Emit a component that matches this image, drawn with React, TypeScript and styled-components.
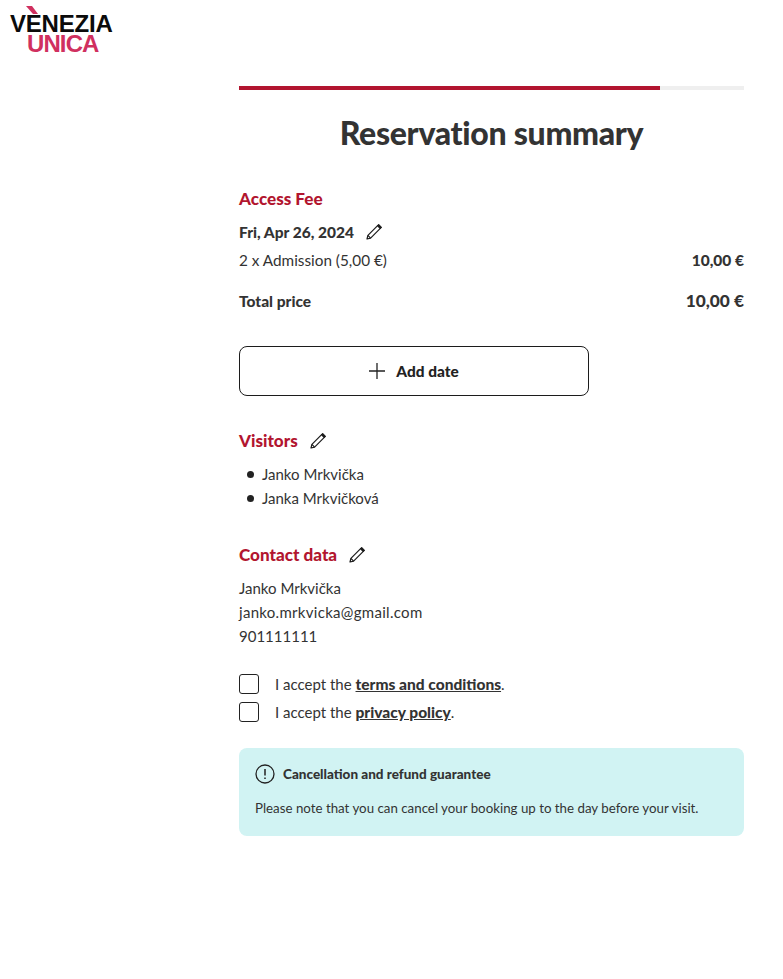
import styled, { createGlobalStyle } from 'styled-components'

const Global = createGlobalStyle`
  html, body { margin: 0; padding: 0; background: #fff; }
  body {
    font-family: "Lato", "Noto Sans", sans-serif;
    color: #333;
  }
`

const Page = styled.div`
  width: 783px;
  height: 979px;
  overflow: hidden;
`

const Logo = styled.div`
  position: relative;
  width: 110px;
  height: 54px;
  margin-left: 10px;
  padding-top: 14px;
  box-sizing: border-box;
  font-family: "Liberation Sans", sans-serif;
  font-weight: 700;
  font-size: 24px;
  line-height: 20px;
  letter-spacing: -0.2px;
  color: #0b0b0b;
  svg {
    position: absolute;
    left: 16px;
    top: 6px;
  }
`

const LogoLower = styled.div`
  color: #d0305f;
  margin-left: 17px;
  letter-spacing: -0.9px;
`

const Main = styled.main`
  width: 505px;
  margin: 32px 0 0 239px;
`

const Progress = styled.div`
  height: 4px;
  background: #efefef;
`

const ProgressFill = styled.div`
  height: 100%;
  background: #b2152f;
`

const Title = styled.h1`
  margin: 22px 0 0;
  font-size: 32px;
  line-height: 42px;
  font-weight: 900;
  text-align: center;
  letter-spacing: -0.3px;
`

const SectionTitle = styled.h2<{ $top: number }>`
  display: flex;
  align-items: center;
  gap: 12px;
  margin: ${p => p.$top}px 0 0;
  font-size: 17.1px;
  line-height: 24px;
  font-weight: 900;
  color: #b2152f;
`

const DateRow = styled.div`
  display: flex;
  align-items: center;
  gap: 12px;
  margin-top: 9px;
  font-size: 15.5px;
  line-height: 24px;
  font-weight: 900;
`

const PriceRow = styled.div<{ $top: number }>`
  display: flex;
  justify-content: space-between;
  margin-top: ${p => p.$top}px;
  font-size: 15.3px;
  line-height: 24px;
`

const Strong = styled.span<{ $size?: number }>`
  font-weight: 900;
  font-size: ${p => p.$size ?? 15.5}px;
`

const AddButton = styled.button`
  display: flex;
  align-items: center;
  justify-content: center;
  gap: 11px;
  box-sizing: border-box;
  width: 350px;
  height: 50px;
  margin-top: 33px;
  background: #fff;
  border: 1px solid #1c1c1c;
  border-radius: 8px;
  color: #222;
  font-family: inherit;
  font-size: 15.4px;
  font-weight: 900;
`

const VisitorList = styled.ul`
  list-style: none;
  margin: 9px 0 0;
  padding: 0;
`

const Visitor = styled.li`
  display: flex;
  align-items: center;
  gap: 8px;
  padding-left: 8px;
  font-size: 15px;
  line-height: 24px;
  &::before {
    content: '';
    width: 7px;
    height: 7px;
    border-radius: 50%;
    background: #222;
  }
`

const ContactBlock = styled.div`
  margin-top: 9px;
  font-size: 15px;
  line-height: 24px;
`

const ContactLine = styled.div<{ $spacing?: number }>`
  letter-spacing: ${p => p.$spacing ?? 0}px;
`

const Checks = styled.div`
  display: flex;
  flex-direction: column;
  gap: 8px;
  margin-top: 26px;
`

const CheckRow = styled.label`
  display: flex;
  align-items: center;
  gap: 16px;
  height: 20px;
  font-size: 15px;
`

const CheckBox = styled.span`
  box-sizing: border-box;
  width: 20px;
  height: 20px;
  border: 1px solid #222;
  border-radius: 3px;
`

const TermsLink = styled.a`
  font-size: 15.5px;
  font-weight: 900;
  color: #333;
  text-decoration: underline;
`

const Notice = styled.div`
  box-sizing: border-box;
  height: 88px;
  margin-top: 26px;
  padding: 16px;
  background: #d1f3f3;
  border-radius: 8px;
`

const NoticeHead = styled.div`
  display: flex;
  align-items: center;
  gap: 8px;
  font-size: 13.5px;
  line-height: 20px;
  font-weight: 900;
`

const NoticeText = styled.p`
  margin: 14px 0 0;
  font-size: 13.3px;
  line-height: 20px;
`

const Pencil = () => (
  <svg width="16" height="16" viewBox="0 0 16 16" fill="none" stroke="#1c1c1c" strokeWidth="1.2" strokeLinejoin="round">
    <path d="M1 15l.9-3.6L11.6 1.7l2.7 2.7L4.6 14.1 1 15z" />
    <path d="M1.9 11.4l2.7 2.7" />
    <path d="M11.6 1.7l1.1-1.1 2.7 2.7-1.1 1.1z" fill="#1c1c1c" />
  </svg>
)

const App = () => {
  return (
    <Page>
      <Global />
      <Logo>
        <svg width="14" height="8" viewBox="0 0 14 8">
          <path d="M0 0h6l6 8H7z" fill="#d0305f" />
        </svg>
        <div>VENEZIA</div>
        <LogoLower>UNICA</LogoLower>
      </Logo>
      <Main>
        <Progress>
          <ProgressFill style={{ width: `${(421 / 505) * 100}%` }} />
        </Progress>
        <Title>Reservation summary</Title>

        <SectionTitle $top={33}>Access Fee</SectionTitle>
        <DateRow>
          Fri, Apr 26, 2024
          <Pencil />
        </DateRow>
        <PriceRow $top={4}>
          <span>2 x Admission (5,00 €)</span>
          <Strong>10,00 €</Strong>
        </PriceRow>
        <PriceRow $top={17}>
          <Strong>Total price</Strong>
          <Strong $size={17.3}>10,00 €</Strong>
        </PriceRow>

        <AddButton type="button">
          <svg width="16" height="16" viewBox="0 0 16 16" stroke="#222" strokeWidth="1.3">
            <path d="M8 0v16M0 8h16" />
          </svg>
          Add date
        </AddButton>

        <SectionTitle $top={33}>
          Visitors
          <Pencil />
        </SectionTitle>
        <VisitorList>
          <Visitor>Janko Mrkvička</Visitor>
          <Visitor>Janka Mrkvičková</Visitor>
        </VisitorList>

        <SectionTitle $top={33}>
          Contact data
          <Pencil />
        </SectionTitle>
        <ContactBlock>
          <ContactLine>Janko Mrkvička</ContactLine>
          <ContactLine $spacing={0.3}>janko.mrkvicka@gmail.com</ContactLine>
          <ContactLine>901111111</ContactLine>
        </ContactBlock>

        <Checks>
          <CheckRow>
            <CheckBox />
            <span>
              I accept the <TermsLink>terms and conditions</TermsLink>.
            </span>
          </CheckRow>
          <CheckRow>
            <CheckBox />
            <span>
              I accept the <TermsLink>privacy policy</TermsLink>.
            </span>
          </CheckRow>
        </Checks>

        <Notice>
          <NoticeHead>
            <svg width="20" height="20" viewBox="0 0 20 20" fill="none" stroke="#222" strokeWidth="1.3">
              <circle cx="10" cy="10" r="9" />
              <path d="M10 5v6.5M10 13.5v1.5" strokeWidth="1.5" />
            </svg>
            Cancellation and refund guarantee
          </NoticeHead>
          <NoticeText>Please note that you can cancel your booking up to the day before your visit.</NoticeText>
        </Notice>
      </Main>
    </Page>
  )
}

export default App
